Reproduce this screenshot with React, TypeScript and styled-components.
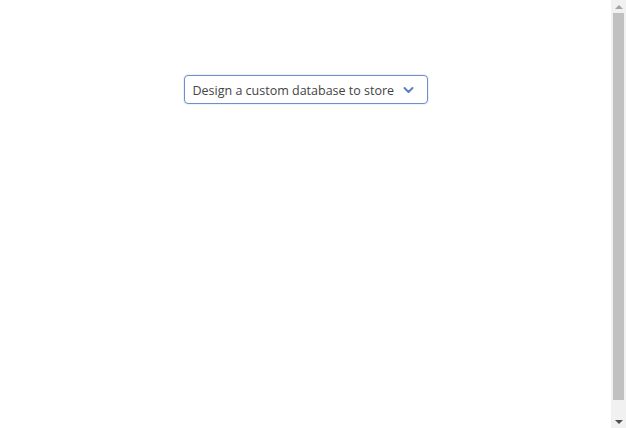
import React from 'react';
import styled, { createGlobalStyle } from 'styled-components';

const GlobalStyle = createGlobalStyle`
   html, body {
      margin: 0;
      padding: 0;
      background: #ffffff;
      overflow: hidden;
      font-family: 'Open Sans', 'Noto Sans', sans-serif;
   }
`;

const Frame = styled.div`
   display: flex;
   height: 100vh;
`;

const Main = styled.main`
   flex: 1;
   display: flex;
   justify-content: center;
   align-items: flex-start;
   padding-top: 75px;
`;

const Select = styled.div`
   width: 244px;
   height: 29px;
   box-sizing: border-box;
   display: flex;
   align-items: center;
   justify-content: space-between;
   padding: 0 13px 0 8px;
   border: 1px solid #6f8fc8;
   border-radius: 4px;
   background: #ffffff;
   box-shadow: 0 0 0 1px rgba(111, 143, 200, 0.12);
   cursor: pointer;
`;

const Label = styled.span`
   font-size: 12.5px;
   color: #444444;
   white-space: nowrap;
   padding-top: 1px;
`;

const Chevron = styled.svg`
   width: 11px;
   height: 8px;
   flex-shrink: 0;
`;

const Scrollbar = styled.div`
   width: 15px;
   display: flex;
   flex-direction: column;
   background: #f1f1f1;
`;

const ArrowButton = styled.div`
   height: 13px;
   display: flex;
   align-items: center;
   justify-content: center;
`;

const Triangle = styled.span<{ $dir: 'up' | 'down'; $color: string }>`
   width: 0;
   height: 0;
   border-left: 4px solid transparent;
   border-right: 4px solid transparent;
   ${({ $dir, $color }) =>
      $dir === 'up'
         ? `border-bottom: 4px solid ${$color};`
         : `border-top: 4px solid ${$color};`}
`;

const Track = styled.div`
   flex: 1;
   display: flex;
   flex-direction: column;
   padding: 0 2px 0 2px;
`;

const Thumb = styled.div`
   height: 387px;
   background: #c1c1c1;
`;

function App(): React.ReactElement {
   return (
      <>
         <GlobalStyle />
         <Frame>
            <Main>
               <Select>
                  <Label>Design a custom database to store</Label>
                  <Chevron viewBox="0 0 11 8">
                     <path
                        d="M1.5 2 L5.5 6 L9.5 2"
                        fill="none"
                        stroke="#5a7fbf"
                        strokeWidth="2"
                        strokeLinecap="round"
                        strokeLinejoin="round"
                     />
                  </Chevron>
               </Select>
            </Main>
            <Scrollbar>
               <ArrowButton>
                  <Triangle $dir="up" $color="#a3a3a3" />
               </ArrowButton>
               <Track>
                  <Thumb />
               </Track>
               <ArrowButton>
                  <Triangle $dir="down" $color="#505050" />
               </ArrowButton>
            </Scrollbar>
         </Frame>
      </>
   );
}

export default App;
